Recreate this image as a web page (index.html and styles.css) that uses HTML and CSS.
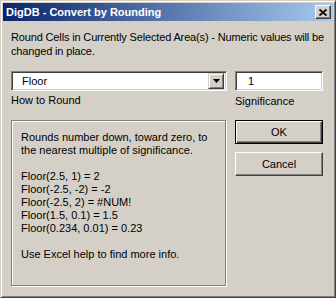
FILE: index.html
```html
<!DOCTYPE html>
<html>
    <head>
        <title>DigDB - Convert by Rounding</title>
        <link rel="stylesheet" href="styles.css">
    </head>
    <body>
        <div class="window">
            <div class="titlebar">
                <span class="title">DigDB - Convert by Rounding</span>
                <button class="close" title="Close">
                    <svg width="8" height="7" viewBox="0 0 8 7">
                        <path d="M0.5 0.5 L7.5 6.5 M7.5 0.5 L0.5 6.5" stroke="#000" stroke-width="1.8" fill="none"/>
                    </svg>
                </button>
            </div>
            <div class="content">
                <p class="intro">Round Cells in Currently Selected Area(s) - Numeric values will be<br>changed in place.</p>
                <div class="form">
                    <div class="combo">
                        <span class="combo-value">Floor</span>
                        <span class="combo-button">
                            <svg width="7" height="4" viewBox="0 0 7 4">
                                <path d="M0 0 H7 L3.5 4 Z" fill="#000"/>
                            </svg>
                        </span>
                    </div>
                    <div class="field">1</div>
                    <label class="label">How to Round</label>
                    <label class="label label-sig">Significance</label>
                    <div class="info">
                        <p>Rounds number down, toward zero, to<br>the nearest multiple of significance.</p>
                        <p>Floor(2.5, 1) = 2<br>Floor(-2.5, -2) = -2<br>Floor(-2.5, 2) = #NUM!<br>Floor(1.5, 0.1) = 1.5<br>Floor(0.234, 0.01) = 0.23</p>
                        <p>Use Excel help to find more info.</p>
                    </div>
                    <div class="buttons">
                        <button class="btn btn-default">OK</button>
                        <button class="btn">Cancel</button>
                    </div>
                </div>
            </div>
        </div>
    </body>
</html>
```

FILE: styles.css
```css
body {
    margin: 0;
    font-family: "Liberation Sans", Arial, sans-serif;
    font-size: 11px;
    color: #000;
}
p {
    margin: 0;
}
.window {
    box-sizing: border-box;
    width: 336px;
    height: 298px;
    padding: 2px;
    background: #d4d0c8;
    border: 1px solid;
    border-color: #d4d0c8 #404040 #404040 #d4d0c8;
    box-shadow: inset 1px 1px 0 #fff, inset -1px -1px 0 #808080;
}
.titlebar {
    display: flex;
    align-items: center;
    justify-content: space-between;
    height: 18px;
    padding: 0 2px 0 3px;
    background: linear-gradient(to right, #0a246a, #a6caf0);
}
.title {
    color: #fff;
    font-weight: bold;
}
.close {
    display: flex;
    align-items: center;
    justify-content: center;
    box-sizing: border-box;
    width: 16px;
    height: 14px;
    padding: 0;
    background: #d4d0c8;
    border: 1px solid;
    border-color: #fff #404040 #404040 #fff;
    box-shadow: inset -1px -1px 0 #808080;
}
.content {
    padding: 9px 8px 0 8px;
}
.intro {
    line-height: 14px;
    white-space: nowrap;
    letter-spacing: -0.15px;
}
.form {
    display: grid;
    grid-template-columns: 216px 88px;
    column-gap: 8px;
    margin-top: 13px;
}
.combo, .field {
    box-sizing: border-box;
    height: 20px;
    display: flex;
    align-items: center;
    background: #fff;
    border: 1px solid;
    border-color: #808080 #fff #fff #808080;
    box-shadow: inset 1px 1px 0 #404040, inset -1px -1px 0 #d4d0c8;
}
.combo {
    justify-content: space-between;
    padding: 2px 2px 2px 10px;
}
.combo-button {
    box-sizing: border-box;
    display: flex;
    align-items: center;
    justify-content: center;
    width: 16px;
    height: 16px;
    background: #d4d0c8;
    border: 1px solid;
    border-color: #d4d0c8 #404040 #404040 #d4d0c8;
    box-shadow: inset 1px 1px 0 #fff, inset -1px -1px 0 #808080;
}
.field {
    padding-left: 12px;
}
.label {
    margin-top: 3px;
    line-height: 13px;
}
.label-sig {
    margin-top: 4px;
}
.info {
    box-sizing: border-box;
    margin-top: 12px;
    width: 215px;
    height: 166px;
    padding: 10px 9px;
    line-height: 13px;
    border: 1px solid #808080;
    box-shadow: inset 1px 1px 0 #fff, 1px 1px 0 #fff;
}
.info p {
    margin-bottom: 13px;
}
.buttons {
    display: flex;
    flex-direction: column;
    gap: 8px;
    margin-top: 12px;
}
.btn {
    box-sizing: border-box;
    width: 88px;
    height: 24px;
    padding: 0;
    font-family: inherit;
    font-size: 11px;
    color: #000;
    background: #d4d0c8;
    border: 1px solid;
    border-color: #fff #404040 #404040 #fff;
    box-shadow: inset -1px -1px 0 #808080, inset 1px 1px 0 #d4d0c8;
}
.btn-default {
    border-color: #000;
    box-shadow: inset 1px 1px 0 #fff, inset -1px -1px 0 #404040, inset -2px -2px 0 #808080;
}
```
